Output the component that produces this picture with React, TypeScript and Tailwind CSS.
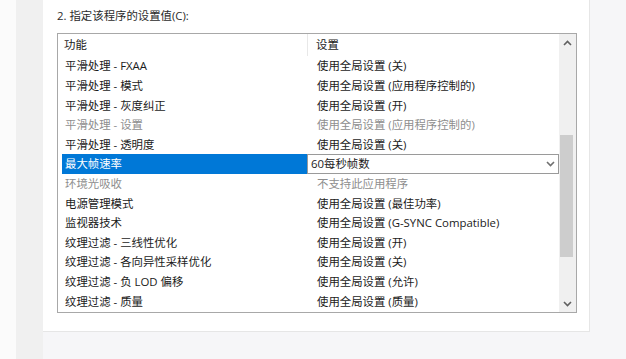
import React from 'react'

type Row = { name: string; value: string; muted?: boolean; selected?: boolean }

const ROWS: Row[] = [
  { name: '平滑处理 - FXAA', value: '使用全局设置 (关)' },
  { name: '平滑处理 - 模式', value: '使用全局设置 (应用程序控制的)' },
  { name: '平滑处理 - 灰度纠正', value: '使用全局设置 (开)' },
  { name: '平滑处理 - 设置', value: '使用全局设置 (应用程序控制的)', muted: true },
  { name: '平滑处理 - 透明度', value: '使用全局设置 (关)' },
  { name: '最大帧速率', value: '60每秒帧数', selected: true },
  { name: '环境光吸收', value: '不支持此应用程序', muted: true },
  { name: '电源管理模式', value: '使用全局设置 (最佳功率)' },
  { name: '监视器技术', value: '使用全局设置 (G-SYNC Compatible)' },
  { name: '纹理过滤 - 三线性优化', value: '使用全局设置 (开)' },
  { name: '纹理过滤 - 各向异性采样优化', value: '使用全局设置 (关)' },
  { name: '纹理过滤 - 负 LOD 偏移', value: '使用全局设置 (允许)' },
  { name: '纹理过滤 - 质量', value: '使用全局设置 (质量)' },
]

function Chevron({ up = false, color = '#606060' }: { up?: boolean; color?: string }) {
  return (
    <svg width="9" height="6" viewBox="0 0 9 6">
      <polyline
        points={up ? '1,5 4.5,1.5 8,5' : '1,1 4.5,4.5 8,1'}
        fill="none"
        stroke={color}
        strokeWidth="1.6"
      />
    </svg>
  )
}

function SettingRow({ row }: { row: Row }) {
  if (row.selected) {
    return (
      <div className="flex h-[19.6px] items-center">
        <div className="ml-[4px] flex h-full w-[245px] items-center bg-[#0078d7] pl-[3px] text-white">
          {row.name}
        </div>
        <div className="flex h-full flex-1 items-center justify-between border border-[#9a9a9a] bg-white pl-[3px] pr-[3px] text-[#1b1b1b]">
          <span>{row.value}</span>
          <Chevron color="#707070" />
        </div>
      </div>
    )
  }
  const tone = row.muted ? 'text-[#8e8e8e]' : 'text-[#1b1b1b]'
  return (
    <div className={`flex h-[19.6px] items-center ${tone}`}>
      <div className="w-[249px] pl-[7px]">{row.name}</div>
      <div className="flex-1 pl-[10px]">{row.value}</div>
    </div>
  )
}

export default function App() {
  return (
    <div className="flex h-[359px] w-[626px] overflow-hidden bg-[#f6f6f8] font-['Open_Sans','Noto_Sans_CJK_SC',sans-serif] text-[11.4px] leading-none">
      <div className="w-[16px] bg-[#fbfbfb]" />
      <div className="w-[27px] bg-[#f0f0f0]" />
      <div className="flex flex-col">
        <div className="h-[332px] w-[547px] border-b border-r border-[#e6e6e6] bg-white pl-[14px]">
          {/* Title */}
          <div className="flex h-[33px] items-center pb-[1px] text-[#2b2b2b]">2. 指定该程序的设置值(C):</div>

          {/* List box */}
          <div className="flex h-[280px] w-[520px] border border-[#a8a8a8]">
            <div className="flex-1">
              <div className="flex h-[22.3px] items-center text-[#1b1b1b]">
                <div className="w-[249px] pl-[6px]">功能</div>
                <div className="h-full w-px bg-[#e8e8e8]" />
                <div className="flex-1 pl-[8px]">设置</div>
              </div>
              {ROWS.map(r => (
                <SettingRow key={r.name} row={r} />
              ))}
            </div>

            {/* Scrollbar */}
            <div className="flex w-[17px] flex-col bg-[#f0f0f0]">
              <div className="flex h-[17px] items-center justify-center">
                <Chevron up />
              </div>
              <div className="h-[84px]" />
              <div className="mx-[1px] h-[122px] w-[13px] bg-[#cdcdcd]" />
              <div className="flex-1" />
              <div className="flex h-[17px] items-center justify-center">
                <Chevron />
              </div>
            </div>
          </div>
        </div>
      </div>
    </div>
  )
}
